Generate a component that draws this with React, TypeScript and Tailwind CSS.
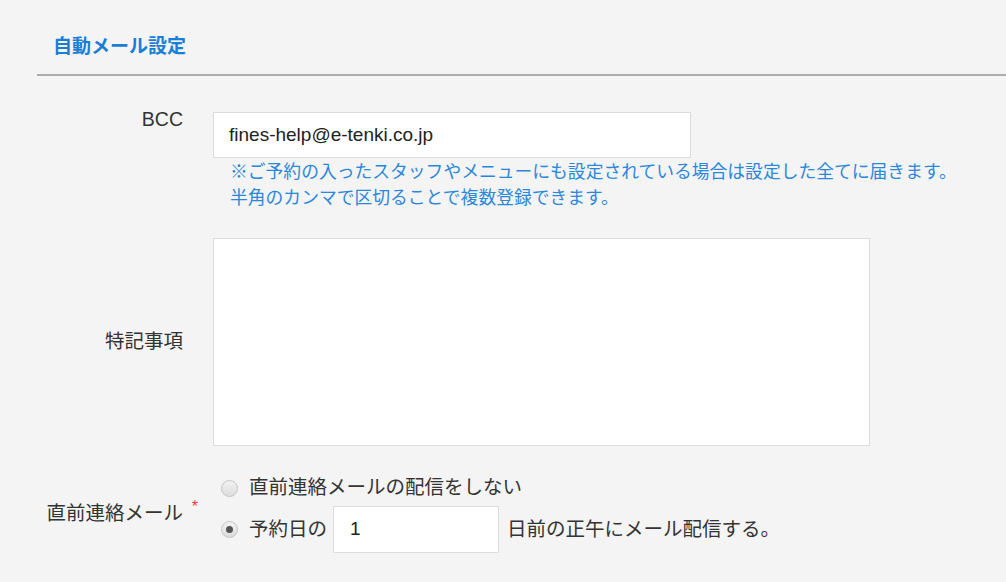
import React from 'react';

function Radio({ checked }: { checked?: boolean }) {
    return (
        <span className="w-[17px] h-[17px] rounded-full border border-[#c4c4c4] bg-gradient-to-b from-[#f2f2f2] to-[#dcdcdc] flex items-center justify-center shrink-0">
            {checked && <span className="w-[7px] h-[7px] rounded-full bg-[#555]" />}
        </span>
    );
}

export default function App() {
    return (
        <main
            className="min-h-screen w-full bg-[#f4f4f4] text-[#333] text-[19.5px]"
            style={{ fontFamily: '"Liberation Sans", "Noto Sans CJK JP", sans-serif' }}
        >
            <div className="ml-[37px] pl-[16px] pt-[33px] pb-[13px] border-b-2 border-[#acacac]">
                <h2 className="text-[19px] leading-[28px] font-bold text-[#1a7ed6]">自動メール設定</h2>
            </div>

            <div className="grid grid-cols-[183px_1fr] gap-x-[30px] mt-[36px]">
                {/* BCC */}
                <div className="text-right leading-[18px] -mt-[2px]">BCC</div>
                <div>
                    <div className="w-[478px] h-[46px] bg-white border border-[#dcdcdc] flex items-center pl-[15px] text-[19px] text-[#222]">
                        fines-help@e-tenki.co.jp
                    </div>
                    <div className="ml-[17px] text-[17.8px] leading-[26px] text-[#2b87d9] pt-[1px]">
                        <p>※ご予約の入ったスタッフやメニューにも設定されている場合は設定した全てに届きます。</p>
                        <p>半角のカンマで区切ることで複数登録できます。</p>
                    </div>
                </div>

                {/* notes */}
                <div className="text-right self-center mt-[27px]">特記事項</div>
                <div className="mt-[27px] w-[657px] h-[208px] bg-white border border-[#dcdcdc]" />

                {/* reminder */}
                <div className="self-center mt-[28px] flex justify-end">
                    <span className="relative">
                        直前連絡メール
                        <span className="absolute -right-[15px] -top-[4px] text-[16px] text-[#e8383d]">*</span>
                    </span>
                </div>
                <div className="mt-[28px] flex flex-col gap-[4px]">
                    <label className="flex items-center gap-[11px] pl-[8px] h-[28px]">
                        <Radio />
                        <span>直前連絡メールの配信をしない</span>
                    </label>
                    <label className="flex items-center pl-[8px]">
                        <Radio checked />
                        <span className="ml-[11px]">予約日の</span>
                        <span className="ml-[6px] w-[166px] h-[47px] bg-white border border-[#dcdcdc] flex items-center pl-[16px] text-[19px] text-[#222]">
                            1
                        </span>
                        <span className="ml-[8px]">日前の正午にメール配信する。</span>
                    </label>
                </div>
            </div>
        </main>
    );
}
